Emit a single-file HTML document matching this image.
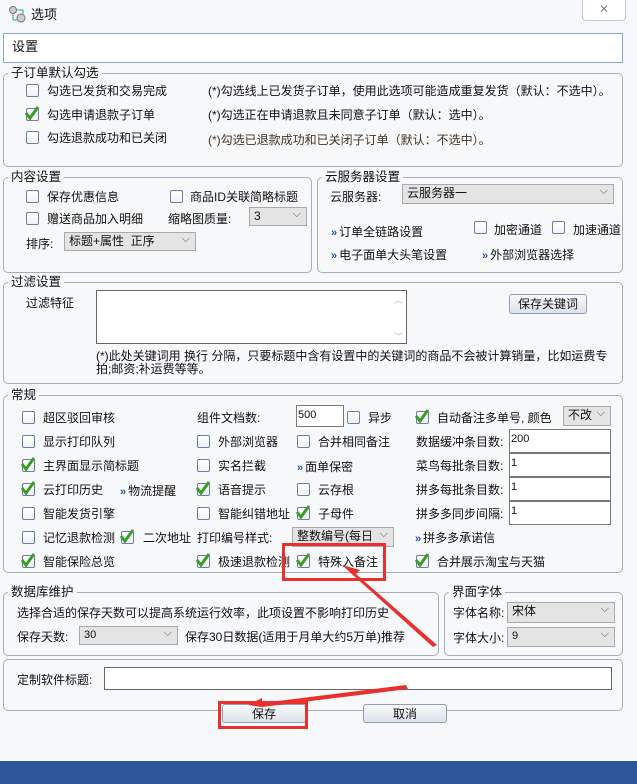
<!DOCTYPE html>
<html><head><meta charset="utf-8"><style>
*{margin:0;padding:0;box-sizing:border-box}
body{width:637px;height:784px;background:#f7f8fa;font:12px "Liberation Sans","Noto Sans CJK SC",sans-serif;color:#111;position:relative;overflow:hidden}
.a{position:absolute;white-space:nowrap;line-height:14px}
.g{position:absolute;border:1px solid #a8aeb8;border-radius:5px}
.lg{position:absolute;background:#f7f8fa;padding:0 3px;line-height:14px;font-size:12.5px}
.cb{position:absolute;width:13px;height:13px;border:1px solid #6c7fa3;border-radius:2px;background:linear-gradient(#fff,#eef2f8)}
.ck{position:absolute;width:16px;height:16px}
.sel{position:absolute;border:1px solid #a9a9a9;background:#e4e4e4;line-height:17px;padding-left:4px}
.sel:after{content:"⌵";position:absolute;right:5px;top:-2px;font-size:11px;color:#555}
.inp{position:absolute;background:#fff;border:1px solid #7a7a7a;line-height:18px;padding-left:1px}
.btn{position:absolute;border:1px solid #8c9db5;border-radius:3px;background:linear-gradient(#f8f9fb,#dde3ea);text-align:center;line-height:18px}
.lk{color:#2750a8;font-weight:bold;font-size:11px;margin-right:2px}
</style></head><body>
<svg class="a" style="left:8px;top:5px" width="18" height="18"><circle cx="5" cy="5" r="3.5" fill="#ccc" stroke="#777"/><circle cx="13" cy="13" r="4" fill="#ccc" stroke="#777"/><path d="M5 9v6h4M9 5h6v4" stroke="#3a8" fill="none"/></svg>
<div class="a" style="left:31px;top:8px;font-size:13px">选项</div>
<div class="a" style="left:582px;top:0;width:44px;height:21px;border:1px solid #c5cbd3;border-top:none;border-radius:0 0 4px 4px;background:#fff;text-align:center;color:#888;line-height:19px">✕</div>
<div class="a" style="left:3px;top:33px;width:620px;height:30px;background:#fff;border:1px solid #8fa6c8"></div>
<div class="a" style="left:12px;top:40px;font-size:13px">设置</div>

<div class="g" style="left:3px;top:73px;width:620px;height:94px"></div><div class="lg" style="left:8px;top:66px">子订单默认勾选</div>
<div class="cb" style="left:26px;top:84px"></div><div class="a" style="left:47px;top:84px">勾选已发货和交易完成</div>
<div class="cb" style="left:26px;top:108px"></div><svg class="ck" style="left:24px;top:105px"><path d="M2 8l4 5 8-11" stroke="#3a9d23" stroke-width="3" fill="none"/></svg><div class="a" style="left:47px;top:108px">勾选申请退款子订单</div>
<div class="cb" style="left:26px;top:131px"></div><div class="a" style="left:47px;top:131px">勾选退款成功和已关闭</div>
<div class="a" style="left:208px;top:84px">(*)勾选线上已发货子订单，使用此选项可能造成重复发货（默认：不选中）。</div>
<div class="a" style="left:208px;top:108px">(*)勾选正在申请退款且未同意子订单（默认：选中）。</div>
<div class="a" style="left:208px;top:133px;color:#432">(*)勾选已退款成功和已关闭子订单（默认：不选中）。</div>

<div class="g" style="left:3px;top:177px;width:309px;height:96px"></div><div class="lg" style="left:8px;top:170px">内容设置</div>
<div class="cb" style="left:26px;top:190px"></div><div class="a" style="left:47px;top:190px">保存优惠信息</div>
<div class="cb" style="left:170px;top:190px"></div><div class="a" style="left:190px;top:190px">商品ID关联简略标题</div>
<div class="cb" style="left:26px;top:212px"></div><div class="a" style="left:47px;top:212px">赠送商品加入明细</div>
<div class="a" style="left:168px;top:212px">缩略图质量:</div><div class="sel" style="left:249px;top:207px;width:58px;height:19px">3</div>
<div class="a" style="left:26px;top:237px">排序:</div><div class="sel" style="left:64px;top:232px;width:132px;height:19px">标题+属性&nbsp; 正序</div>

<div class="g" style="left:317px;top:177px;width:306px;height:96px"></div><div class="lg" style="left:322px;top:170px">云服务器设置</div>
<div class="a" style="left:330px;top:190px">云服务器:</div><div class="sel" style="left:402px;top:184px;width:212px;height:20px">云服务器一</div>
<div class="a" style="left:331px;top:225px"><span class="lk">»</span>订单全链路设置</div>
<div class="cb" style="left:474px;top:221px"></div><div class="a" style="left:494px;top:223px">加密通道</div>
<div class="cb" style="left:552px;top:221px"></div><div class="a" style="left:573px;top:223px">加速通道</div>
<div class="a" style="left:331px;top:248px"><span class="lk">»</span>电子面单大头笔设置</div>
<div class="a" style="left:482px;top:248px"><span class="lk">»</span>外部浏览器选择</div>

<div class="g" style="left:3px;top:282px;width:620px;height:102px"></div><div class="lg" style="left:8px;top:275px">过滤设置</div>
<div class="a" style="left:26px;top:296px">过滤特征</div>
<div class="a" style="left:96px;top:290px;width:311px;height:54px;background:#fff;border:1px solid #666"></div>
<div class="a" style="left:394px;top:293px;color:#bbb;font-size:9px">︿</div><div class="a" style="left:394px;top:330px;color:#bbb;font-size:9px">﹀</div>
<div class="btn" style="left:509px;top:294px;width:78px;height:20px">保存关键词</div>
<div class="a" style="left:96px;top:350px;line-height:13px">(*)此处关键词用 换行 分隔，只要标题中含有设置中的关键词的商品不会被计算销量，比如运费专<br>拍;邮资;补运费等等。</div>

<div class="g" style="left:3px;top:395px;width:620px;height:178px"></div><div class="lg" style="left:8px;top:388px">常规</div>
<div class="cb" style="left:22px;top:411px"></div><div class="a" style="left:43px;top:411px">超区驳回审核</div>
<div class="cb" style="left:22px;top:435px"></div><div class="a" style="left:43px;top:435px">显示打印队列</div>
<div class="cb" style="left:22px;top:459px"></div><svg class="ck" style="left:20px;top:456px"><path d="M2 8l4 5 8-11" stroke="#3a9d23" stroke-width="3" fill="none"/></svg><div class="a" style="left:43px;top:459px">主界面显示简标题</div>
<div class="cb" style="left:22px;top:483px"></div><svg class="ck" style="left:20px;top:480px"><path d="M2 8l4 5 8-11" stroke="#3a9d23" stroke-width="3" fill="none"/></svg><div class="a" style="left:43px;top:483px">云打印历史</div>
<div class="a" style="left:120px;top:484px"><span class="lk">»</span>物流提醒</div>
<div class="cb" style="left:22px;top:507px"></div><div class="a" style="left:43px;top:507px">智能发货引擎</div>
<div class="cb" style="left:22px;top:531px"></div><div class="a" style="left:43px;top:531px">记忆退款检测</div>
<div class="cb" style="left:121px;top:531px"></div><svg class="ck" style="left:119px;top:528px"><path d="M2 8l4 5 8-11" stroke="#3a9d23" stroke-width="3" fill="none"/></svg><div class="a" style="left:143px;top:531px">二次地址</div>
<div class="cb" style="left:22px;top:555px"></div><svg class="ck" style="left:20px;top:552px"><path d="M2 8l4 5 8-11" stroke="#3a9d23" stroke-width="3" fill="none"/></svg><div class="a" style="left:43px;top:555px">智能保险总览</div>
<div class="a" style="left:197px;top:411px">组件文档数:</div>
<div class="inp" style="left:296px;top:405px;width:48px;height:22px;font-size:11px">500</div>
<div class="cb" style="left:347px;top:411px"></div><div class="a" style="left:368px;top:411px">异步</div>
<div class="cb" style="left:197px;top:435px"></div><div class="a" style="left:218px;top:435px">外部浏览器</div>
<div class="cb" style="left:297px;top:435px"></div><div class="a" style="left:318px;top:435px">合并相同备注</div>
<div class="cb" style="left:197px;top:459px"></div><div class="a" style="left:218px;top:459px">实名拦截</div>
<div class="a" style="left:297px;top:460px"><span class="lk">»</span>面单保密</div>
<div class="cb" style="left:197px;top:483px"></div><svg class="ck" style="left:195px;top:480px"><path d="M2 8l4 5 8-11" stroke="#3a9d23" stroke-width="3" fill="none"/></svg><div class="a" style="left:218px;top:483px">语音提示</div>
<div class="cb" style="left:297px;top:483px"></div><div class="a" style="left:318px;top:483px">云存根</div>
<div class="cb" style="left:197px;top:507px"></div><div class="a" style="left:218px;top:507px">智能纠错地址</div>
<div class="cb" style="left:297px;top:507px"></div><svg class="ck" style="left:295px;top:504px"><path d="M2 8l4 5 8-11" stroke="#3a9d23" stroke-width="3" fill="none"/></svg><div class="a" style="left:318px;top:507px">子母件</div>
<div class="a" style="left:197px;top:531px">打印编号样式:</div>
<div class="sel" style="left:292px;top:527px;width:102px;height:20px;overflow:hidden">整数编号(每日</div>
<div class="cb" style="left:197px;top:555px"></div><svg class="ck" style="left:195px;top:552px"><path d="M2 8l4 5 8-11" stroke="#3a9d23" stroke-width="3" fill="none"/></svg><div class="a" style="left:218px;top:555px">极速退款检测</div>
<div class="cb" style="left:297px;top:555px"></div><svg class="ck" style="left:295px;top:552px"><path d="M2 8l4 5 8-11" stroke="#3a9d23" stroke-width="3" fill="none"/></svg><div class="a" style="left:318px;top:555px">特殊入备注</div>
<div class="cb" style="left:416px;top:411px"></div><svg class="ck" style="left:414px;top:408px"><path d="M2 8l4 5 8-11" stroke="#3a9d23" stroke-width="3" fill="none"/></svg><div class="a" style="left:437px;top:411px">自动备注多单号, 颜色</div>
<div class="sel" style="left:563px;top:406px;width:48px;height:20px">不改</div>
<div class="a" style="left:416px;top:435px">数据缓冲条目数:</div><div class="inp" style="left:509px;top:429px;width:102px;height:24px;font-size:11px">200</div>
<div class="a" style="left:416px;top:459px">菜鸟每批条目数:</div><div class="inp" style="left:509px;top:453px;width:102px;height:24px;font-size:11px">1</div>
<div class="a" style="left:416px;top:483px">拼多每批条目数:</div><div class="inp" style="left:509px;top:477px;width:102px;height:24px;font-size:11px">1</div>
<div class="a" style="left:416px;top:507px">拼多多同步间隔:</div><div class="inp" style="left:509px;top:501px;width:102px;height:24px;font-size:11px">1</div>
<div class="a" style="left:415px;top:531px"><span class="lk">»</span>拼多多承诺信</div>
<div class="cb" style="left:416px;top:555px"></div><svg class="ck" style="left:414px;top:552px"><path d="M2 8l4 5 8-11" stroke="#3a9d23" stroke-width="3" fill="none"/></svg><div class="a" style="left:437px;top:555px">合并展示淘宝与天猫</div>

<div class="g" style="left:3px;top:592px;width:436px;height:64px"></div><div class="lg" style="left:8px;top:585px">数据库维护</div>
<div class="a" style="left:17px;top:606px">选择合适的保存天数可以提高系统运行效率，此项设置不影响打印历史</div>
<div class="a" style="left:17px;top:630px">保存天数:</div><div class="sel" style="left:79px;top:626px;width:99px;height:19px;font-size:11px">30</div>
<div class="a" style="left:185px;top:630px">保存30日数据(适用于月单大约5万单)推荐</div>

<div class="g" style="left:444px;top:592px;width:179px;height:64px"></div><div class="lg" style="left:449px;top:585px">界面字体</div>
<div class="a" style="left:453px;top:606px">字体名称:</div><div class="sel" style="left:507px;top:602px;width:108px;height:21px">宋体</div>
<div class="a" style="left:453px;top:631px">字体大小:</div><div class="sel" style="left:507px;top:627px;width:108px;height:20px;font-size:11px">9</div>

<div class="g" style="left:3px;top:659px;width:620px;height:52px"></div>
<div class="a" style="left:17px;top:673px">定制软件标题:</div>
<div class="inp" style="left:104px;top:667px;width:508px;height:23px;border-color:#666"></div>

<div class="btn" style="left:222px;top:704px;width:84px;height:19px">保存</div>
<div class="btn" style="left:363px;top:704px;width:84px;height:19px">取消</div>

<div class="a" style="left:218px;top:701px;width:90px;height:28px;border:3px solid #e8302e"></div>
<div class="a" style="left:282px;top:543px;width:104px;height:38px;border:3px solid #e8302e"></div>
<svg class="a" style="left:0;top:0" width="637" height="784">
<polygon points="437,645 433,647 354,576 342,565 360,570 356,574" fill="#e8302e"/>
<polygon points="406,685 408,689 262,707 248,705 262,698 262,703" fill="#e8302e"/>
</svg>
<div class="a" style="left:0;top:761px;width:637px;height:23px;background:#2c5699"></div>
</body></html>
